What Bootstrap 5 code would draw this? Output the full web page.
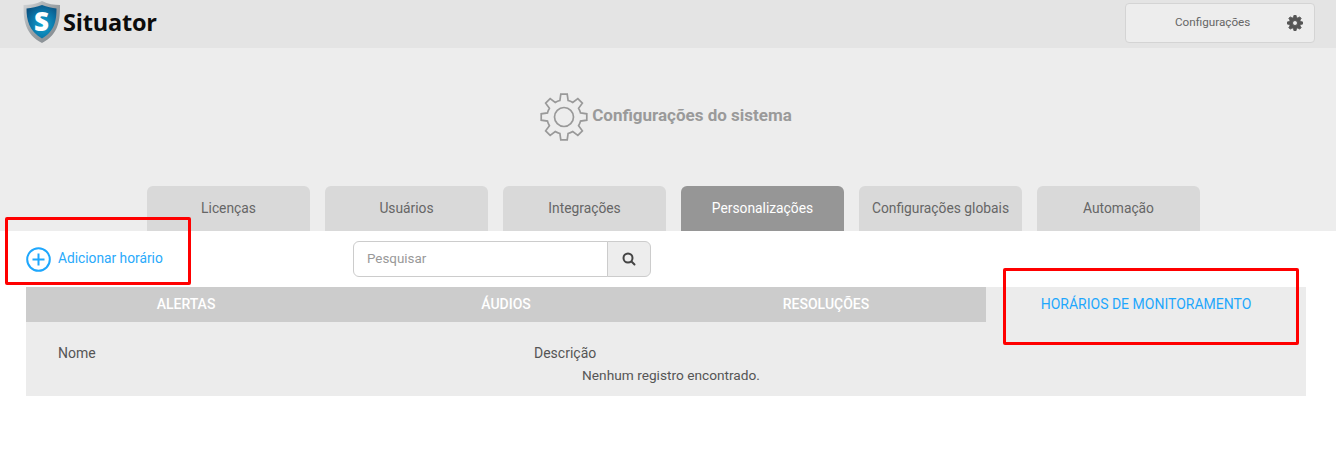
<!DOCTYPE html>
<html lang="pt-BR">
<head>
<meta charset="utf-8">
<title>Situator</title>
<link href="https://cdn.jsdelivr.net/npm/bootstrap@5.3.0/dist/css/bootstrap.min.css" rel="stylesheet">
<style>
html,body{height:465px;overflow:hidden}
body{position:relative;background:#fff;font-family:Roboto,"Liberation Sans",sans-serif;font-size:14px;color:#555}
.sit-top{height:48px;background:#e4e4e4;padding:0 21px 0 23px}
.sit-brand{font-family:"Open Sans","Liberation Sans",sans-serif;font-weight:700;font-size:23.500px;color:#0c0c0c;letter-spacing:-.2px;line-height:1;margin-left:2px;margin-top:2px}
.sit-cfg{width:190px;height:40px;margin-top:3px;background:#ededed;border:1px solid #d4d4d4;border-radius:4px;font-size:11.700px;color:#666;padding:0 11px 0 49px}
.sit-cfg:hover{background:#ededed;color:#666;border-color:#d4d4d4}
.sit-head{height:183px;background:#ededed;padding-top:45px}
.sit-title{margin:0 0 45px -4px;font-family:Roboto,sans-serif;font-weight:700;font-size:17px;color:#9a9a9a}
.sit-title span{margin-top:-4px}
.sit-tabs{padding-left:147px;gap:15px}
.sit-tab{width:163px;height:45px;padding:0;background:#d9d9d9;color:#666;border-radius:6px 6px 0 0;font-size:13.800px}
.sit-tab:hover,.sit-tab:focus{color:#666}
.sit-tab.is-on{background:#969696;color:#fff}
.sit-bar{height:56px;padding-left:26px}
.sit-add{width:327px;color:#2aaafb;font-size:13.750px;text-decoration:none;gap:7px}
.sit-add span{margin-top:-2px}
.sit-add:hover{color:#2aaafb}
.sit-search{width:298px;height:36px}
.sit-search .form-control{font-size:13.400px;padding-left:13px;border-color:#ccc;color:#555}
.sit-search .form-control::placeholder{color:#999}
.sit-search .btn{width:44px;background:#ededed;border-color:#ccc;padding:0}
.sit-panel{margin:0 30px 0 26px;width:1280px}
.sit-sub{display:grid;grid-template-columns:repeat(4,320px);background:#ccc;height:35px}
.sit-sub .nav-link{height:35px;padding:0;color:#fff;font-weight:500;font-size:14px;text-transform:uppercase;border-radius:0}
.sit-sub .nav-link.is-on{background:#ececec;color:#1ea7fd;font-weight:400}
.sit-body{height:74px;background:#ececec}
.sit-table{--bs-table-bg:transparent;font-size:14px;color:#555;margin:0}
.sit-table th{font-weight:400;padding:22px 0 0;line-height:18px;color:#555;background:transparent}
.sit-table th:first-child{width:508px;padding-left:32px}
.sit-table td{padding:4px 0 0 10px;text-align:center;font-size:13.700px;line-height:18px;color:#555;background:transparent}
.sit-mark{position:absolute;border:3px solid #f00;border-radius:2px;pointer-events:none}
.sit-mark-a{left:5px;top:217px;width:186px;height:68px}
.sit-mark-b{left:1003px;top:268px;width:296px;height:77px}
</style>
</head>
<body>
<header class="sit-top d-flex justify-content-between align-items-start">
  <a class="d-flex align-items-center text-decoration-none" href="#">
    <svg width="38" height="44" viewBox="0 0 38 44" aria-hidden="true">
      <defs>
        <linearGradient id="sv" x1="0" y1="0" x2="1" y2="1"><stop offset="0" stop-color="#d4d6d8"/><stop offset=".5" stop-color="#9aa0a4"/><stop offset="1" stop-color="#80878c"/></linearGradient>
        <radialGradient id="bl" cx=".55" cy=".6" r=".7"><stop offset="0" stop-color="#12a6d3"/><stop offset=".6" stop-color="#0b73a6"/><stop offset="1" stop-color="#0a4f7e"/></radialGradient>
      </defs>
      <path d="M19 1 C25 4 31 5 37 5 C37 20 36 34 19 43 C2 34 0.500 20 .5 5 C7 5 13 4 19 1Z" fill="url(#sv)"/>
      <path d="M19 5 C24 7 29 8 33.500 8.500 C33.500 20 32 31 19 38.500 C6 31 3.500 20 3.500 8.500 C9 8 14 7 19 5Z" fill="url(#bl)"/>
      <text x="18.500" y="31" text-anchor="middle" font-family="Open Sans,Liberation Sans,sans-serif" font-weight="800" font-size="26" fill="#fff">S</text>
    </svg>
    <span class="sit-brand">Situator</span>
  </a>
  <button type="button" class="btn sit-cfg d-flex justify-content-between align-items-center">
    <span>Configurações</span>
    <svg width="16" height="16" viewBox="0 0 48 48" aria-hidden="true"><path fill="#555" stroke="#555" stroke-width="3" fill-rule="evenodd" d="M40.500 19.890 46.780 20.800 46.780 27.200 40.500 28.110A17 17 0 0 1 38.570 32.760L42.370 37.840 37.840 42.370 32.760 38.570A17 17 0 0 1 28.110 40.500L27.200 46.780 20.800 46.780 19.890 40.500A17 17 0 0 1 15.240 38.570L10.160 42.370 5.630 37.840 9.430 32.760A17 17 0 0 1 7.500 28.110L1.220 27.200 1.220 20.800 7.500 19.890A17 17 0 0 1 9.430 15.240L5.630 10.160 10.160 5.630 15.240 9.430A17 17 0 0 1 19.890 7.500L20.800 1.220 27.200 1.220 28.110 7.500A17 17 0 0 1 32.760 9.430L37.840 5.630 42.370 10.160 38.570 15.240A17 17 0 0 1 40.500 19.890ZM24 16.500A7.500 7.500 0 1 0 24 31.500 7.500 7.500 0 1 0 24 16.500Z"/></svg>
  </button>
</header>

<section class="sit-head">
  <h1 class="sit-title d-flex justify-content-center align-items-center gap-1">
    <svg width="48" height="48" viewBox="0 0 48 48" fill="none" stroke="#999" stroke-width="1.700" aria-hidden="true"><path d="M40.500 19.890 46.780 20.800 46.780 27.200 40.500 28.110A17 17 0 0 1 38.570 32.760L42.370 37.840 37.840 42.370 32.760 38.570A17 17 0 0 1 28.110 40.500L27.200 46.780 20.800 46.780 19.890 40.500A17 17 0 0 1 15.240 38.570L10.160 42.370 5.630 37.840 9.430 32.760A17 17 0 0 1 7.500 28.110L1.220 27.200 1.220 20.800 7.500 19.890A17 17 0 0 1 9.430 15.240L5.630 10.160 10.160 5.630 15.240 9.430A17 17 0 0 1 19.890 7.500L20.800 1.220 27.200 1.220 28.110 7.500A17 17 0 0 1 32.760 9.430L37.840 5.630 42.370 10.160 38.570 15.240A17 17 0 0 1 40.500 19.890Z"/><circle cx="24" cy="24" r="9.500"/></svg>
    <span>Configurações do sistema</span>
  </h1>
  <nav class="nav sit-tabs">
    <a class="nav-link sit-tab d-flex align-items-center justify-content-center" href="#">Licenças</a>
    <a class="nav-link sit-tab d-flex align-items-center justify-content-center" href="#">Usuários</a>
    <a class="nav-link sit-tab d-flex align-items-center justify-content-center" href="#">Integrações</a>
    <a class="nav-link sit-tab is-on d-flex align-items-center justify-content-center" href="#">Personalizações</a>
    <a class="nav-link sit-tab d-flex align-items-center justify-content-center" href="#">Configurações globais</a>
    <a class="nav-link sit-tab d-flex align-items-center justify-content-center" href="#">Automação</a>
  </nav>
</section>

<div class="sit-bar d-flex align-items-center">
  <a class="sit-add d-flex align-items-center" href="#">
    <svg width="25" height="25" viewBox="0 0 25 25" fill="none" stroke="#1ea7fd" aria-hidden="true"><circle cx="12.500" cy="12.500" r="11.300" stroke-width="2"/><path d="M12.500 6.500v12M6.500 12.500h12" stroke-width="2"/></svg>
    <span>Adicionar horário</span>
  </a>
  <div class="input-group sit-search">
    <input type="text" class="form-control" placeholder="Pesquisar">
    <button type="button" class="btn d-flex align-items-center justify-content-center" aria-label="Pesquisar">
      <svg width="14" height="14" viewBox="0 0 14 14" fill="none" stroke="#444" stroke-width="2" aria-hidden="true"><circle cx="6" cy="6" r="4.500"/><path d="M9.500 9.500 12.500 12.500" stroke-linecap="round"/></svg>
    </button>
  </div>
</div>

<main class="sit-panel">
  <nav class="nav sit-sub">
    <a class="nav-link d-flex align-items-center justify-content-center" href="#">Alertas</a>
    <a class="nav-link d-flex align-items-center justify-content-center" href="#">Áudios</a>
    <a class="nav-link d-flex align-items-center justify-content-center" href="#">Resoluções</a>
    <a class="nav-link is-on d-flex align-items-center justify-content-center" href="#">Horários de monitoramento</a>
  </nav>
  <div class="sit-body">
    <table class="table table-borderless sit-table">
      <thead><tr><th>Nome</th><th>Descrição</th></tr></thead>
      <tbody><tr><td colspan="2">Nenhum registro encontrado.</td></tr></tbody>
    </table>
  </div>
</main>

<div class="sit-mark sit-mark-a"></div>
<div class="sit-mark sit-mark-b"></div>
</body>
</html>
